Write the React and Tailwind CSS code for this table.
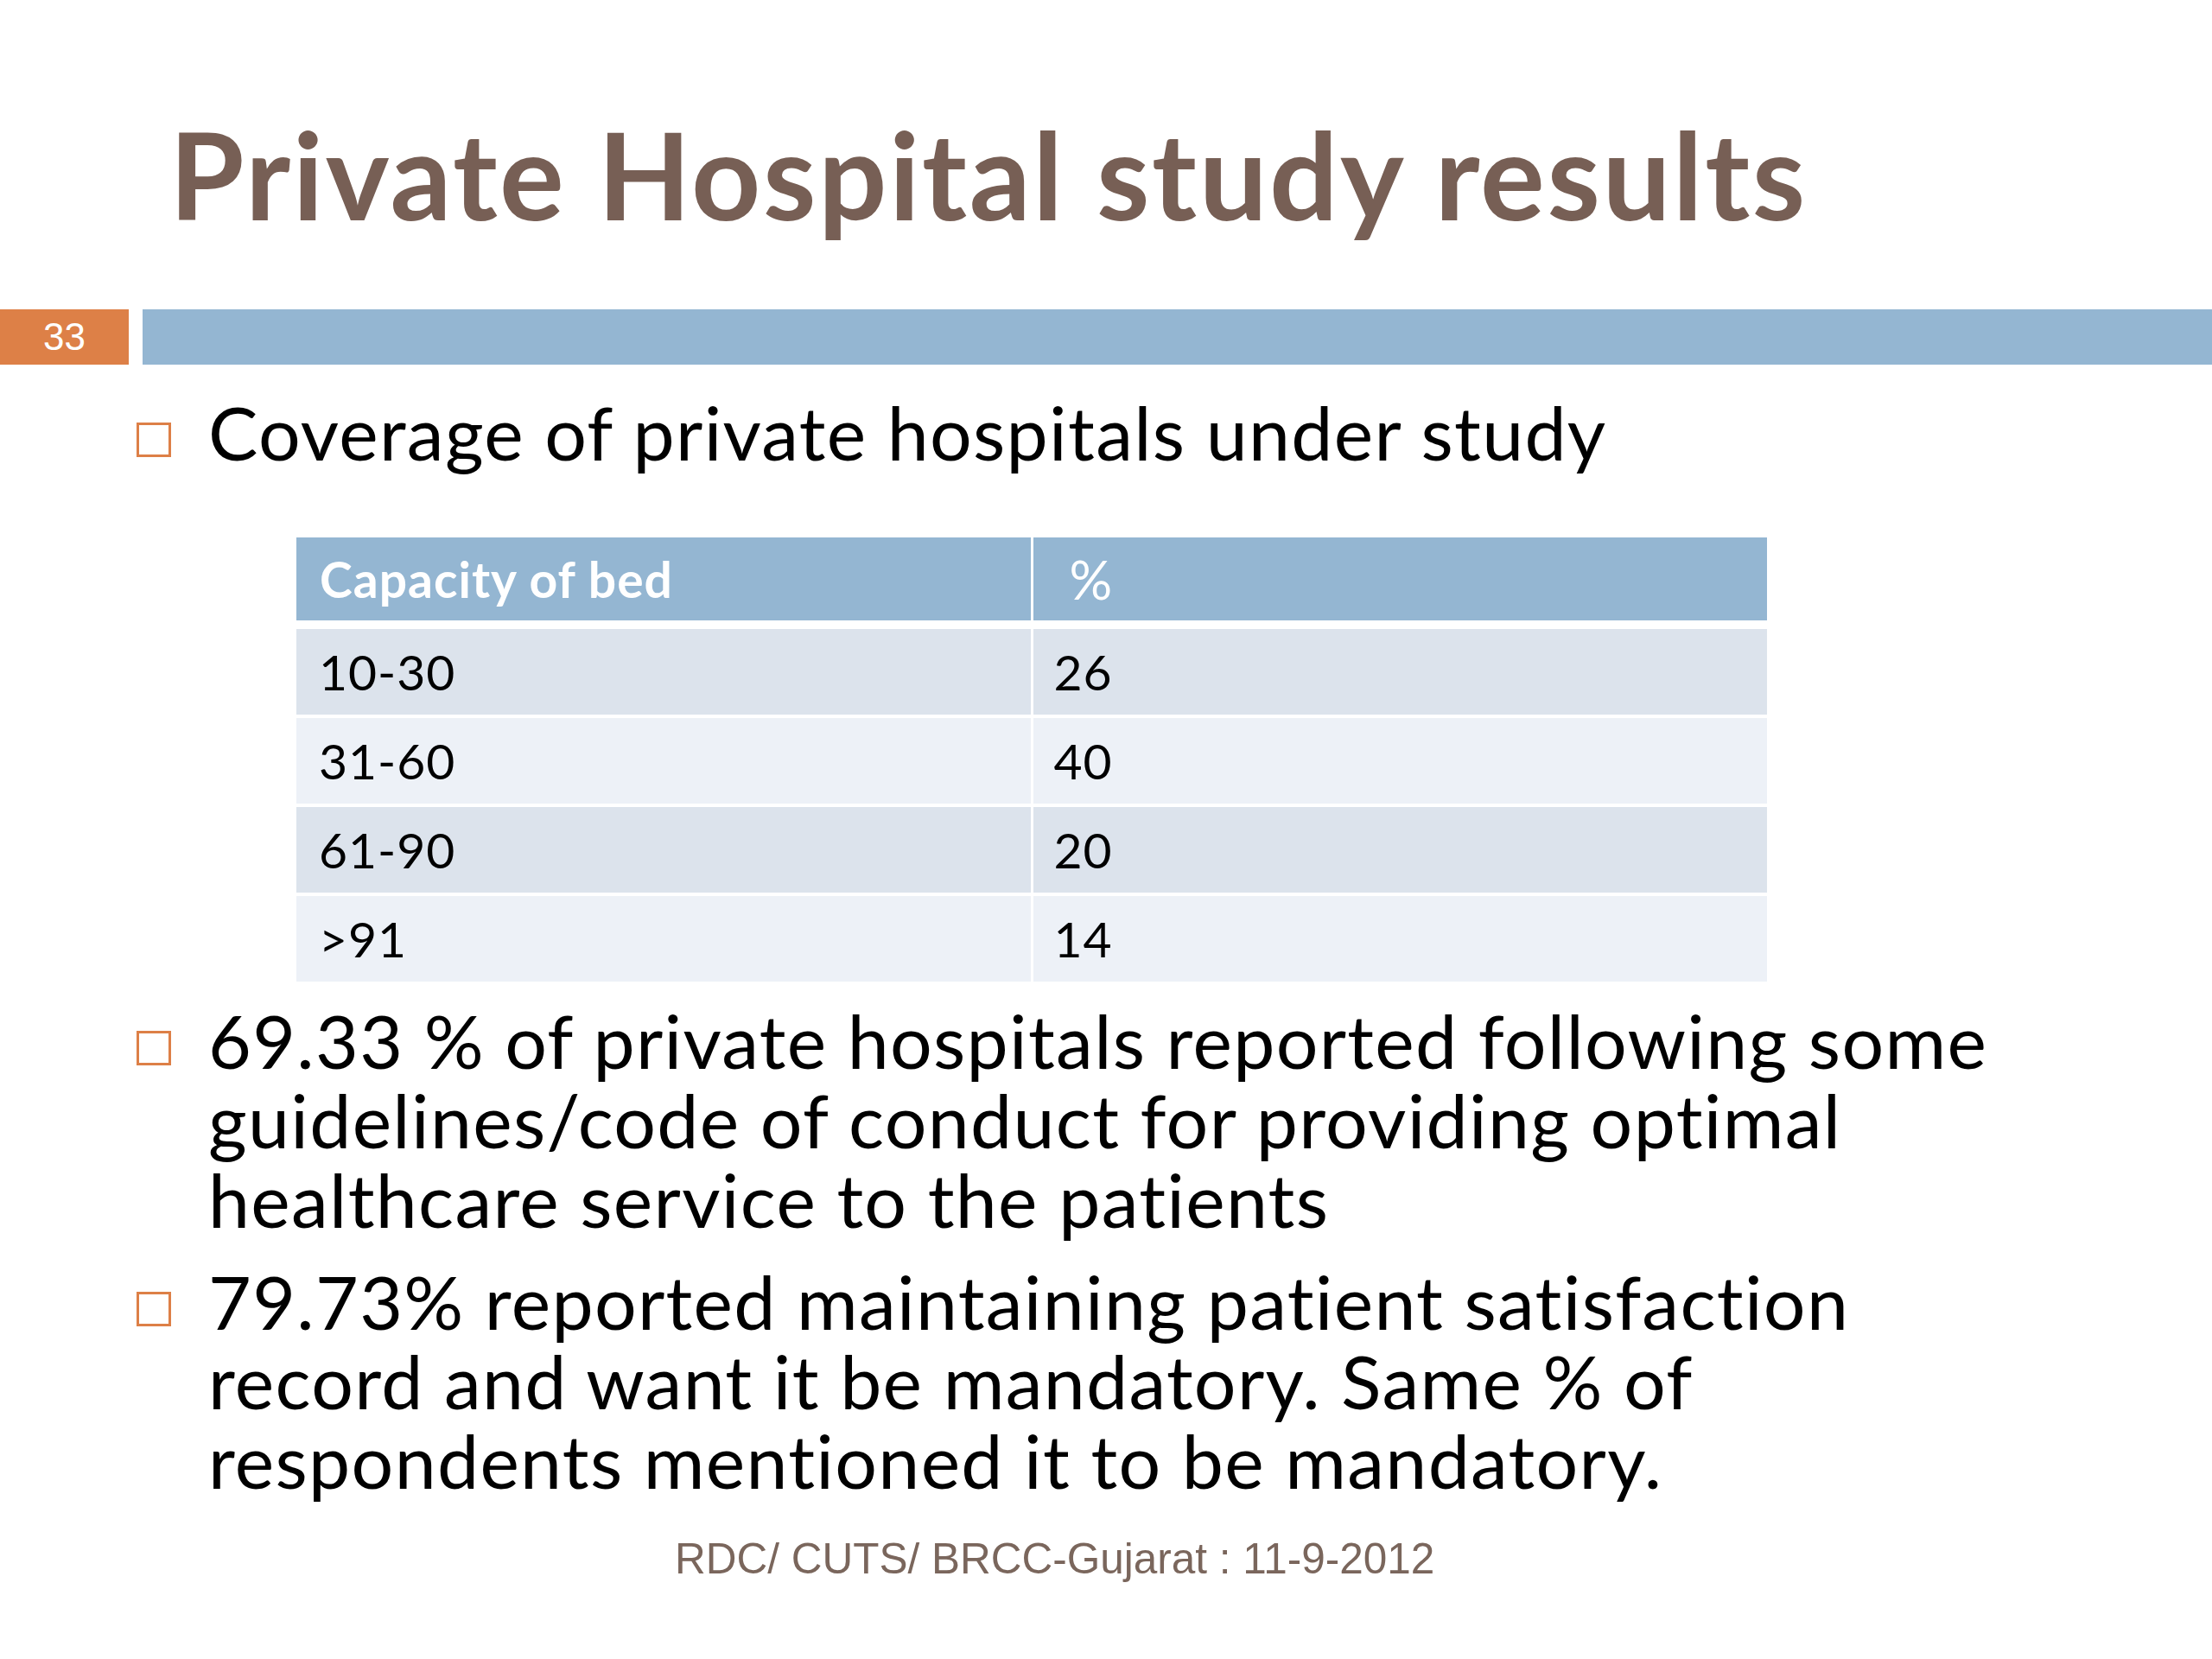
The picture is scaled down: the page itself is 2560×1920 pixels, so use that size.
const rows = [
  ["10-30", "26"],
  ["31-60", "40"],
  ["61-90", "20"],
  [">91", "14"],
];

function Bullet({ children, className = "" }) {
  return (
    <div className={"flex items-start " + className}>
      <div className="ml-[158px] mt-[35px] h-[40px] w-[40px] shrink-0 border-[3px] border-[#dd8047]" />
      <p className="ml-[43px] whitespace-nowrap text-[86px] leading-[92px] tracking-[1.3px] text-black">
        {children}
      </p>
    </div>
  );
}

export default function App() {
  return (
    <div className="relative h-[1920px] w-[2560px] overflow-hidden bg-white font-['Lato',sans-serif]">
      <div className="h-[358px] pl-[196px] pt-[131px]">
        <h1 className="whitespace-nowrap text-[140px] font-bold leading-none tracking-[2.5px] text-[#775f55]">
          Private Hospital study results
        </h1>
      </div>

      <div className="flex h-[64px] gap-[16px]">
        <div className="flex w-[149px] items-center justify-center bg-[#dd8047] font-['Liberation_Sans_Narrow','Liberation_Sans',Arial,sans-serif] text-[44px] leading-none text-white">
          33
        </div>
        <div className="flex-1 bg-[#94b6d2]" />
      </div>

      <Bullet className="mt-[32px]">Coverage of private hospitals under study</Bullet>

      <div className="ml-[343px] mt-[76px] w-[1702px]">
        <div className="grid h-[96px] grid-cols-2 gap-x-[3px]">
          <div className="flex items-center bg-[#94b6d2] pl-[27px] text-[57px] font-bold leading-none tracking-[1px] text-white">
            Capacity of bed
          </div>
          <div className="flex items-center bg-[#94b6d2] pl-[42px] text-[62px] leading-none text-white">
            %
          </div>
        </div>
        <div className="mt-[10px] flex flex-col gap-[4px]">
          {rows.map(([cap, pct], i) => (
            <div key={cap} className="grid h-[99px] grid-cols-2 gap-x-[3px]">
              <div
                className={
                  "flex items-center pl-[26px] text-[57px] leading-none tracking-[1px] text-black " +
                  (i % 2 === 0 ? "bg-[#dce3ec]" : "bg-[#edf1f7]")
                }
              >
                {cap}
              </div>
              <div
                className={
                  "flex items-center pl-[24px] text-[57px] leading-none tracking-[1px] text-black " +
                  (i % 2 === 0 ? "bg-[#dce3ec]" : "bg-[#edf1f7]")
                }
              >
                {pct}
              </div>
            </div>
          ))}
        </div>
      </div>

      <Bullet className="mt-[22px]">
        69.33 % of private hospitals reported following some
        <br />
        guidelines/code of conduct for providing optimal
        <br />
        healthcare service to the patients
      </Bullet>

      <Bullet className="mt-[26px]">
        79.73% reported maintaining patient satisfaction
        <br />
        record and want it be mandatory. Same % of
        <br />
        respondents mentioned it to be mandatory.
      </Bullet>

      <p className="ml-[781px] mt-[43px] font-['Liberation_Sans',Arial,sans-serif] text-[49.5px] leading-none text-[#7a665c]">
        RDC/ CUTS/ BRCC-Gujarat : 11-9-2012
      </p>
    </div>
  );
}
